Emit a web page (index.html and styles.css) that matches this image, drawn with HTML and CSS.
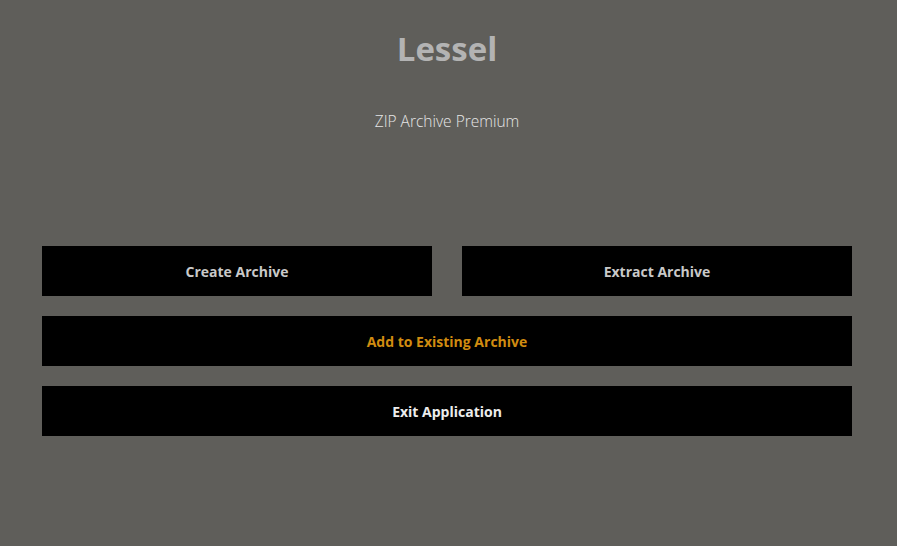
FILE: index.html
```html
<!DOCTYPE html>
<html>
<head>
<meta charset="utf-8">
<link rel="stylesheet" href="styles.css">
</head>
<body>
<div class="app">
  <header class="header">
    <h1 class="title">Lessel</h1>
    <p class="subtitle">ZIP Archive Premium</p>
  </header>
  <main class="actions">
    <div class="row two">
      <button class="btn">Create Archive</button>
      <button class="btn">Extract Archive</button>
    </div>
    <button class="btn accent">Add to Existing Archive</button>
    <button class="btn bright">Exit Application</button>
  </main>
</div>
</body>
</html>
```
FILE: styles.css
```css
html, body {
  margin: 0;
  padding: 0;
  height: 100%;
}
body {
  background: #5f5e5a;
  font-family: "Open Sans", "DejaVu Sans", sans-serif;
  -webkit-font-smoothing: none;
}
.app {
  padding: 0 45px 0 42px;
}
.header {
  display: flex;
  flex-direction: column;
  align-items: center;
  padding-top: 26px;
  height: 220px;
  box-sizing: border-box;
}
.title {
  margin: 0;
  font-size: 33px;
  line-height: 46px;
  font-weight: 700;
  color: #b3b3b3;
}
.subtitle {
  margin: 39px 0 0;
  font-size: 15.5px;
  line-height: 20px;
  font-weight: 300;
  color: #e6e6e6;
}
.actions {
  display: flex;
  flex-direction: column;
  gap: 20px;
  margin-top: 26px;
}
.row.two {
  display: grid;
  grid-template-columns: 1fr 1fr;
  gap: 30px;
}
.btn {
  height: 50px;
  border: 0;
  background: #000;
  color: #c9c9c9;
  font-family: inherit;
  font-size: 14px;
  font-weight: 700;
  padding: 0;
  cursor: pointer;
}
.btn.accent { color: #d18c10; }
.btn.bright { color: #ececec; }
```
